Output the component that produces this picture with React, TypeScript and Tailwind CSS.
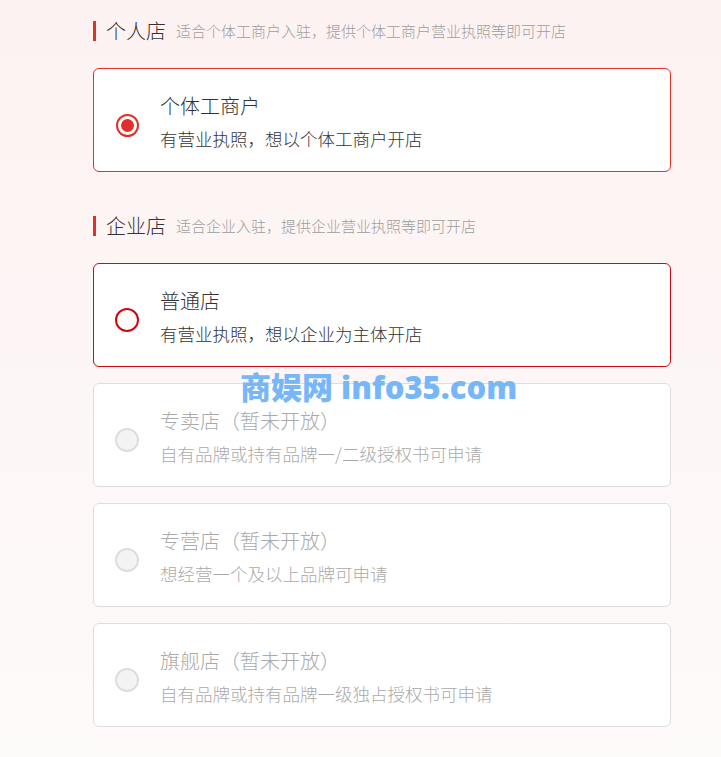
const sections = [
  {
    title: "个人店",
    hint: "适合个体工商户入驻，提供个体工商户营业执照等即可开店",
    options: [
      { name: "个体工商户", desc: "有营业执照，想以个体工商户开店", state: "checked" },
    ],
  },
  {
    title: "企业店",
    hint: "适合企业入驻，提供企业营业执照等即可开店",
    options: [
      { name: "普通店", desc: "有营业执照，想以企业为主体开店", state: "active" },
      { name: "专卖店（暂未开放）", desc: "自有品牌或持有品牌一/二级授权书可申请", state: "disabled" },
      { name: "专营店（暂未开放）", desc: "想经营一个及以上品牌可申请", state: "disabled" },
      { name: "旗舰店（暂未开放）", desc: "自有品牌或持有品牌一级独占授权书可申请", state: "disabled" },
    ],
  },
];

type Option = { name: string; desc: string; state: string };

const Radio = ({ state }: { state: string }) => {
  if (state === "checked") {
    return (
      <div className="w-[23px] h-[23px] rounded-full border-2 border-[#e0302a] bg-white flex items-center justify-center">
        <div className="w-[13px] h-[13px] rounded-full bg-[#e0302a]" />
      </div>
    );
  }
  if (state === "active") {
    return <div className="w-[24px] h-[24px] rounded-full border-2 border-[#cc0a12] bg-white" />;
  }
  return <div className="w-[24px] h-[24px] rounded-full border-2 border-[#dddddd] bg-[#f3f3f3]" />;
};

const OptionCard = ({ option }: { option: Option }) => {
  const disabled = option.state === "disabled";
  return (
    <div
      className={
        "flex h-[104px] rounded-[6px] border bg-white pl-[21px] pt-[22px] " +
        (option.state === "checked"
          ? "border-[#e0302a]"
          : option.state === "active"
          ? "border-[#cc0a12]"
          : "border-[#dedede]")
      }
    >
      <div className="w-[24px] h-[24px] mt-[22px] flex items-center justify-center">
        <Radio state={option.state} />
      </div>
      <div className="ml-[21px] flex flex-col font-light">
        <div className={"text-[20px] leading-[30px] " + (disabled ? "text-[#aaaaaa]" : "text-[#333333]")}>
          {option.name}
        </div>
        <div className={"mt-[4px] text-[17.5px] leading-[28px] " + (disabled ? "text-[#aaaaaa]" : "text-[#333333]")}>
          {option.desc}
        </div>
      </div>
    </div>
  );
};

export default function App() {
  return (
    <div
      className="relative w-[721px] h-[757px] overflow-hidden bg-gradient-to-b from-[#fdf2f2] to-[#fdfafa]"
      style={{ fontFamily: '"Noto Sans CJK SC", "Noto Sans", sans-serif' }}
    >
      <div className="ml-[93px] w-[578px] pt-[21px]">
        {sections.map((s, i) => (
          <div key={s.title} className={i > 0 ? "mt-[44px]" : ""}>
            <div className="flex items-center h-[20px] mb-[27px] font-light">
              <div className="w-[3px] h-[20px] bg-[#e0302a]" />
              <div className="ml-[10px] text-[20px] leading-[20px] text-[#333333]">{s.title}</div>
              <div className="ml-[10px] text-[15px] leading-[20px] text-[#9e9e9e]">{s.hint}</div>
            </div>
            <div className="flex flex-col gap-[16px]">
              {s.options.map((o) => (
                <OptionCard key={o.name} option={o} />
              ))}
            </div>
          </div>
        ))}
      </div>

      {/* watermark */}
      <div
        className="absolute left-[240px] top-[364px] text-[31px] leading-[46px] font-extrabold text-[#78b7f7] whitespace-nowrap"
        style={{ fontFamily: '"Open Sans", "Noto Sans CJK SC", sans-serif' }}
      >
        商娱网 info35.com
      </div>
    </div>
  );
}
